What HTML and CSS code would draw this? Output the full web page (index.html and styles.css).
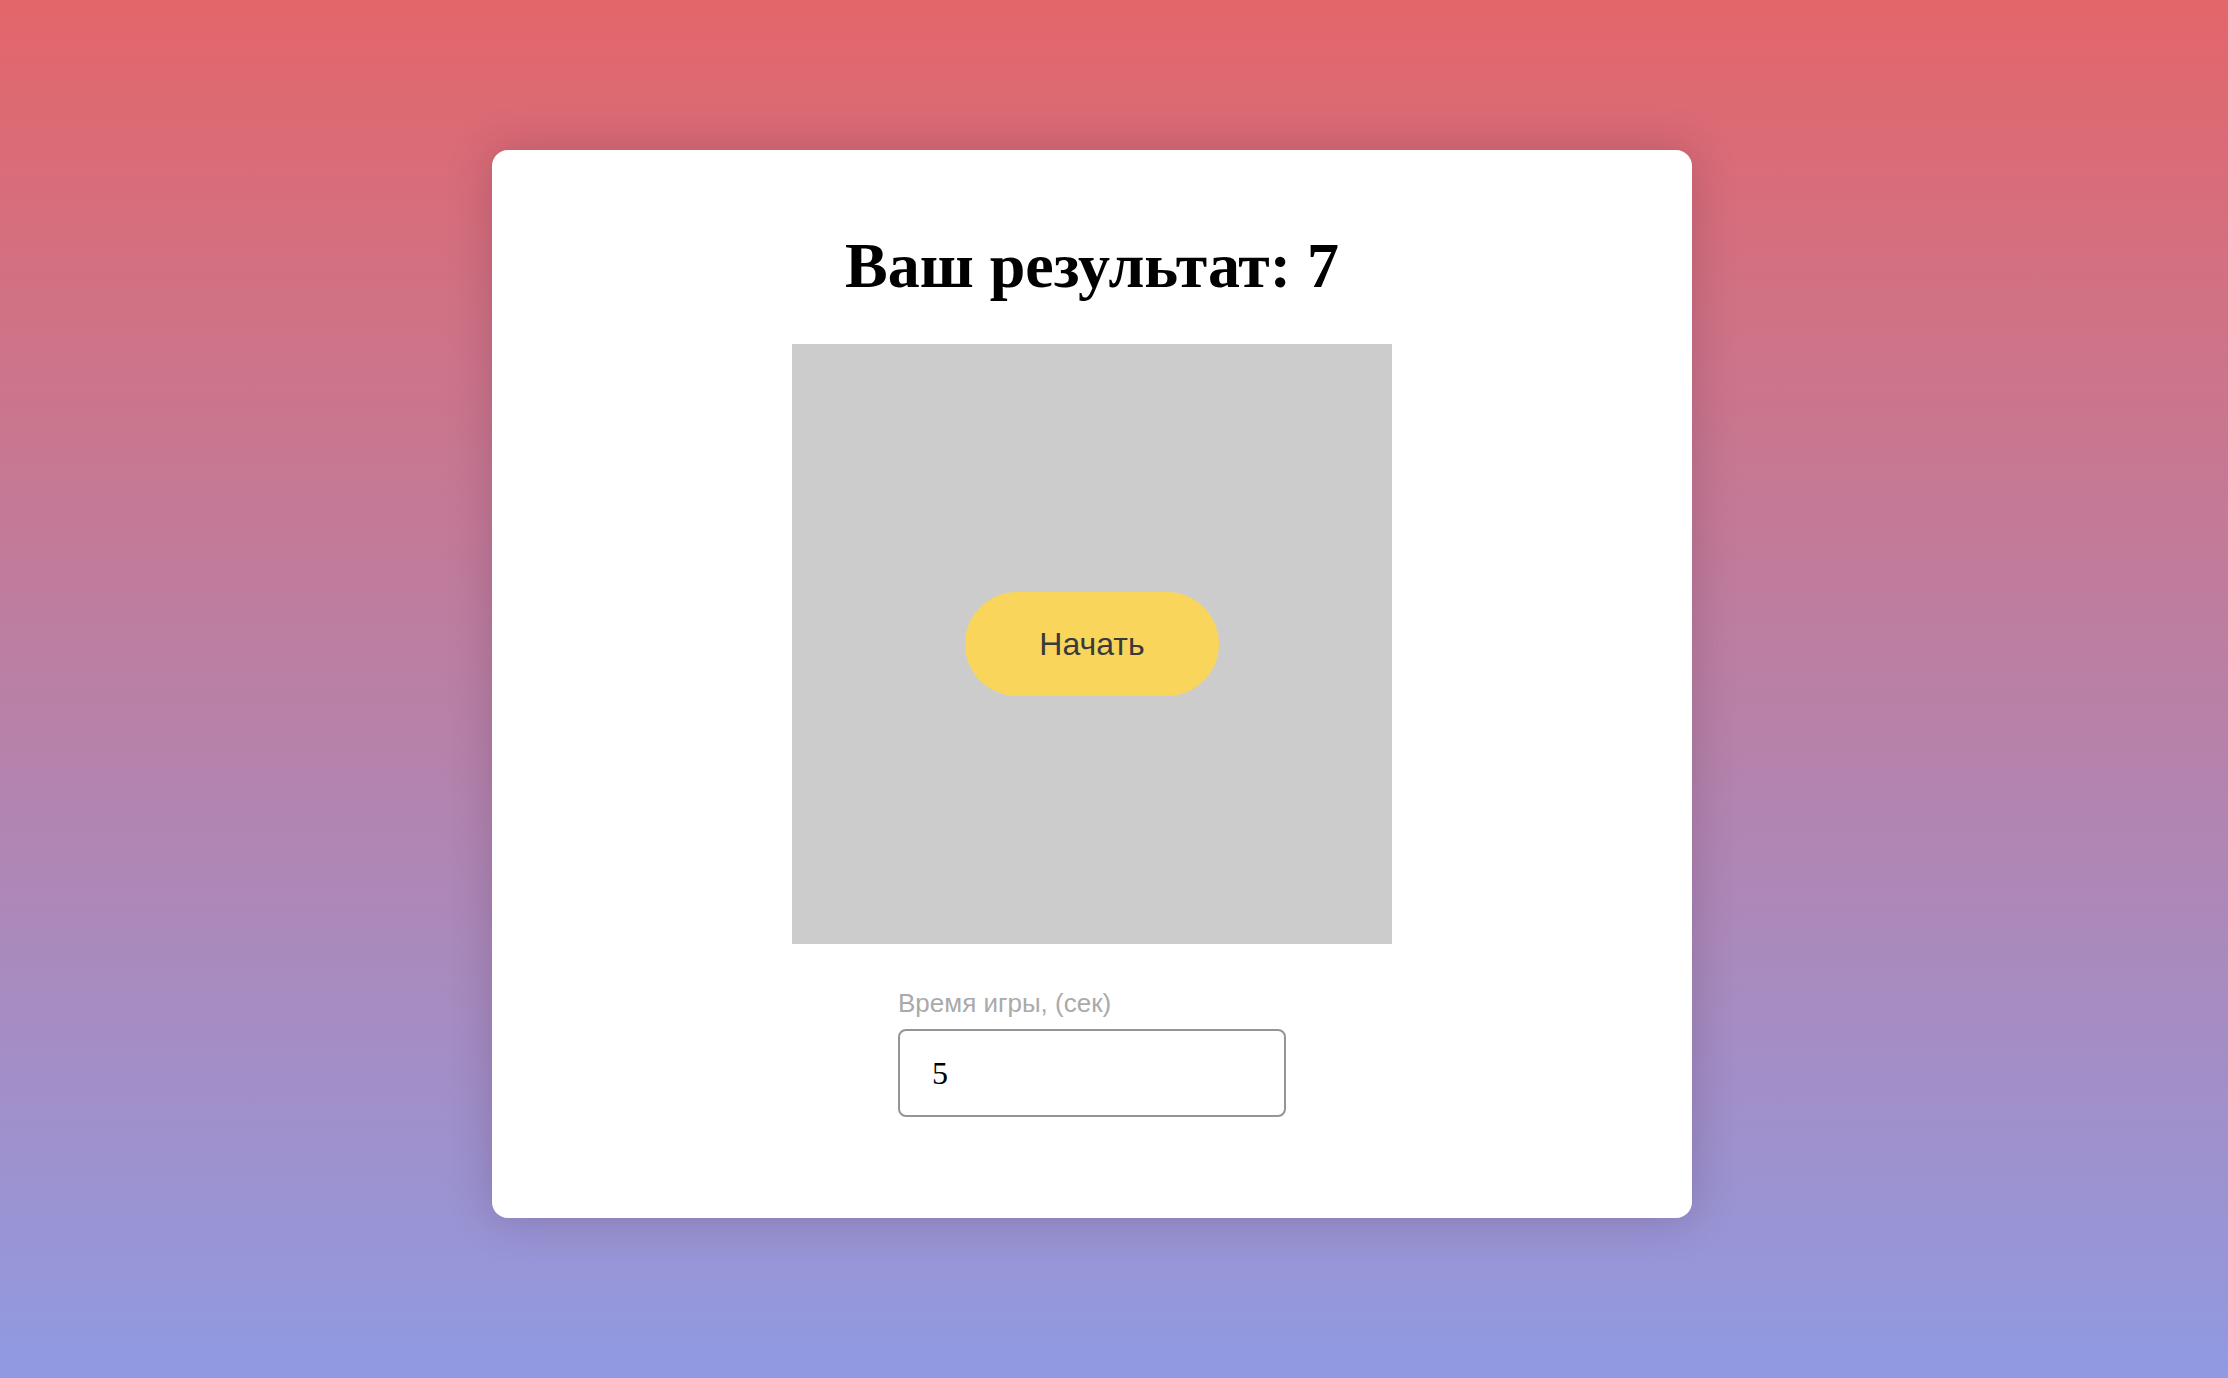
FILE: index.html
```html
<!DOCTYPE html>
<html lang="ru">
<head>
<meta charset="utf-8">
<title>Игра</title>
<link rel="stylesheet" href="styles.css">
</head>
<body>
<main class="page">
  <section class="card">
    <h1 class="title">Ваш результат: 7</h1>
    <div class="game">
      <button class="start">Начать</button>
    </div>
    <div class="field">
      <label class="field-label" for="time">Время игры, (сек)</label>
      <input class="field-input" id="time" type="text" value="5">
    </div>
  </section>
</main>
</body>
</html>
```

FILE: styles.css
```css
html, body {
  margin: 0;
  padding: 0;
  height: 100%;
}

body {
  background: linear-gradient(to bottom, #e3666a 0%, #909ae2 100%);
  font-family: "Liberation Serif", "Times New Roman", serif;
}

.page {
  box-sizing: border-box;
  height: 1378px;
  display: flex;
  justify-content: center;
  align-items: flex-start;
  padding: 150px 44px 0 0;
}

.card {
  box-sizing: border-box;
  width: 1200px;
  height: 1068px;
  background: #ffffff;
  border-radius: 16px;
  box-shadow: 0 0 45px rgba(60, 20, 40, 0.22);
  display: flex;
  flex-direction: column;
  align-items: center;
  padding-top: 36px;
}

.title {
  margin: 43px 0 42px;
  font-family: "Liberation Serif", "Times New Roman", serif;
  font-weight: bold;
  font-size: 64px;
  line-height: 73px;
  color: #000;
}

.game {
  width: 600px;
  height: 600px;
  background: #cccccc;
  display: flex;
  align-items: center;
  justify-content: center;
}

.start {
  height: 104px;
  padding: 0 74px;
  border: none;
  border-radius: 52px;
  background: #f9d55b;
  color: #3a3a3a;
  font-family: "Liberation Sans", Arial, sans-serif;
  font-size: 32px;
  cursor: pointer;
}

.field {
  width: 388px;
  display: flex;
  flex-direction: column;
  margin-top: 43px;
}

.field-label {
  font-family: "Liberation Sans", Arial, sans-serif;
  font-size: 26px;
  line-height: 32px;
  color: #aaaaaa;
  margin-bottom: 10px;
}

.field-input {
  box-sizing: border-box;
  width: 388px;
  height: 88px;
  border: 2px solid #959595;
  border-radius: 8px;
  padding: 0 32px;
  font-family: "Liberation Serif", "Times New Roman", serif;
  font-size: 32px;
  color: #000;
  background: #fff;
  outline: none;
}
```
